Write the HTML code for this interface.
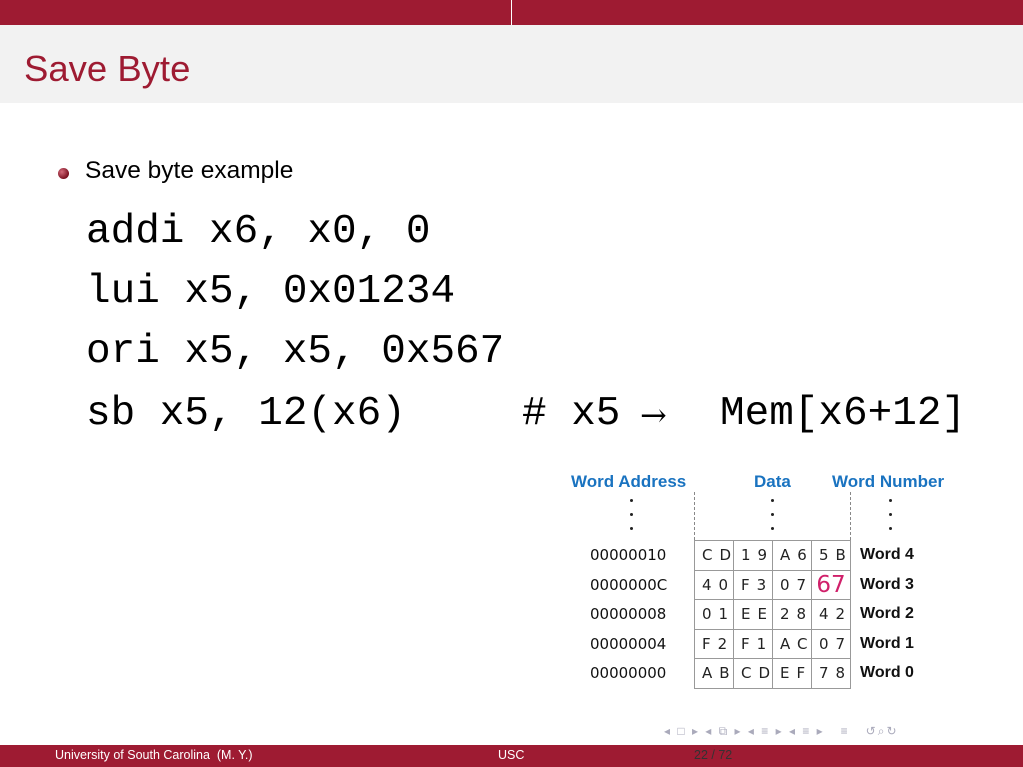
<!DOCTYPE html>
<html><head><meta charset="utf-8"><style>
body{margin:0;width:1023px;height:767px;position:relative;background:#fff;overflow:hidden;font-family:"Liberation Sans",sans-serif}
.a{position:absolute;white-space:pre}
.code{font-family:"Liberation Mono",monospace;font-size:41px;color:#000;line-height:1}
.t{border-collapse:collapse;position:absolute;left:694px;top:540px;table-layout:fixed;width:156px}
.t td{border:1px solid #999;width:38px;height:28.5px;font-family:"DejaVu Sans",sans-serif;font-size:15px;color:#222;text-align:center;padding:0;letter-spacing:7px;text-indent:7px;overflow:hidden;white-space:nowrap}
.h{color:#1a73c0;font-weight:bold;font-family:"Liberation Sans",sans-serif;font-size:17px}
.ad{font-family:"DejaVu Sans",sans-serif;font-size:15px;color:#111}
.wn{font-family:"Liberation Sans",sans-serif;font-weight:bold;font-size:16px;color:#111}
.dot{position:absolute;width:3px;height:3px;background:#222;border-radius:50%}
</style></head><body>
<div class="a" style="left:0;top:0;width:511px;height:25px;background:#9e1b32"></div>
<div class="a" style="left:512px;top:0;width:511px;height:25px;background:#9e1b32"></div>
<div class="a" style="left:0;top:25px;width:1023px;height:78px;background:#f2f2f2"></div>
<div class="a" style="left:24px;top:48px;font-size:36.5px;color:#9e1b32">Save Byte</div>
<div class="a" style="left:58px;top:168px;width:11px;height:11px;border-radius:50%;background:radial-gradient(circle at 35% 35%,#d46a7a,#7a1020 70%)"></div>
<div class="a" style="left:85px;top:157px;font-size:24.5px;color:#000">Save byte example</div>
<div class="a code" style="left:86px;top:212px">addi x6, x0, 0</div>
<div class="a code" style="left:86px;top:272px">lui x5, 0x01234</div>
<div class="a code" style="left:86px;top:332px">ori x5, x5, 0x567</div>
<div class="a code" style="left:86px;top:394px">sb x5, 12(x6)</div>
<div class="a code" style="left:522px;top:394px"># x5</div>
<div class="a" style="left:640px;top:396px;font-size:32px;font-family:'DejaVu Serif',serif">→</div>
<div class="a code" style="left:720px;top:394px">Mem[x6+12]</div>

<div class="a h" style="left:571px;top:472px">Word Address</div>
<div class="a h" style="left:754px;top:472px">Data</div>
<div class="a h" style="left:832px;top:472px">Word Number</div>
<div class="dot" style="left:630px;top:499px"></div><div class="dot" style="left:630px;top:513px"></div><div class="dot" style="left:630px;top:527px"></div>
<div class="dot" style="left:771px;top:499px"></div><div class="dot" style="left:771px;top:513px"></div><div class="dot" style="left:771px;top:527px"></div>
<div class="dot" style="left:889px;top:499px"></div><div class="dot" style="left:889px;top:513px"></div><div class="dot" style="left:889px;top:527px"></div>
<div class="a" style="left:694px;top:492px;height:48px;border-left:1px dashed #888"></div>
<div class="a" style="left:850px;top:492px;height:48px;border-left:1px dashed #888"></div>
<table class="t">
<tr><td>CD</td><td>19</td><td>A6</td><td>5B</td></tr>
<tr><td>40</td><td>F3</td><td>07</td><td style="color:#d0206a;font-size:23px;letter-spacing:0;text-indent:0">67</td></tr>
<tr><td>01</td><td>EE</td><td>28</td><td>42</td></tr>
<tr><td>F2</td><td>F1</td><td>AC</td><td>07</td></tr>
<tr><td>AB</td><td>CD</td><td>EF</td><td>78</td></tr>
</table>
<div class="a ad" style="left:590px;top:546px">00000010</div>
<div class="a ad" style="left:590px;top:576px">0000000C</div>
<div class="a ad" style="left:590px;top:605px">00000008</div>
<div class="a ad" style="left:590px;top:635px">00000004</div>
<div class="a ad" style="left:590px;top:664px">00000000</div>
<div class="a wn" style="left:860px;top:546px">Word 4</div>
<div class="a wn" style="left:860px;top:576px">Word 3</div>
<div class="a wn" style="left:860px;top:605px">Word 2</div>
<div class="a wn" style="left:860px;top:635px">Word 1</div>
<div class="a wn" style="left:860px;top:664px">Word 0</div>

<div class="a" style="left:664px;top:724px;font-size:12px;color:#aab;letter-spacing:2px">◂ □ ▸ ◂ ⧉ ▸ ◂ ≡ ▸ ◂ ≡ ▸   ≡   ↺⌕↻</div>
<div class="a" style="left:0;top:745px;width:1023px;height:22px;background:#9e1b32"></div>
<div class="a" style="left:55px;top:748px;font-size:12.5px;color:#fff">University of South Carolina  (M. Y.)</div>
<div class="a" style="left:498px;top:748px;font-size:12.5px;color:#fff">USC</div>
<div class="a" style="left:694px;top:748px;font-size:12.5px;color:#333">22 / 72</div>
</body></html>
